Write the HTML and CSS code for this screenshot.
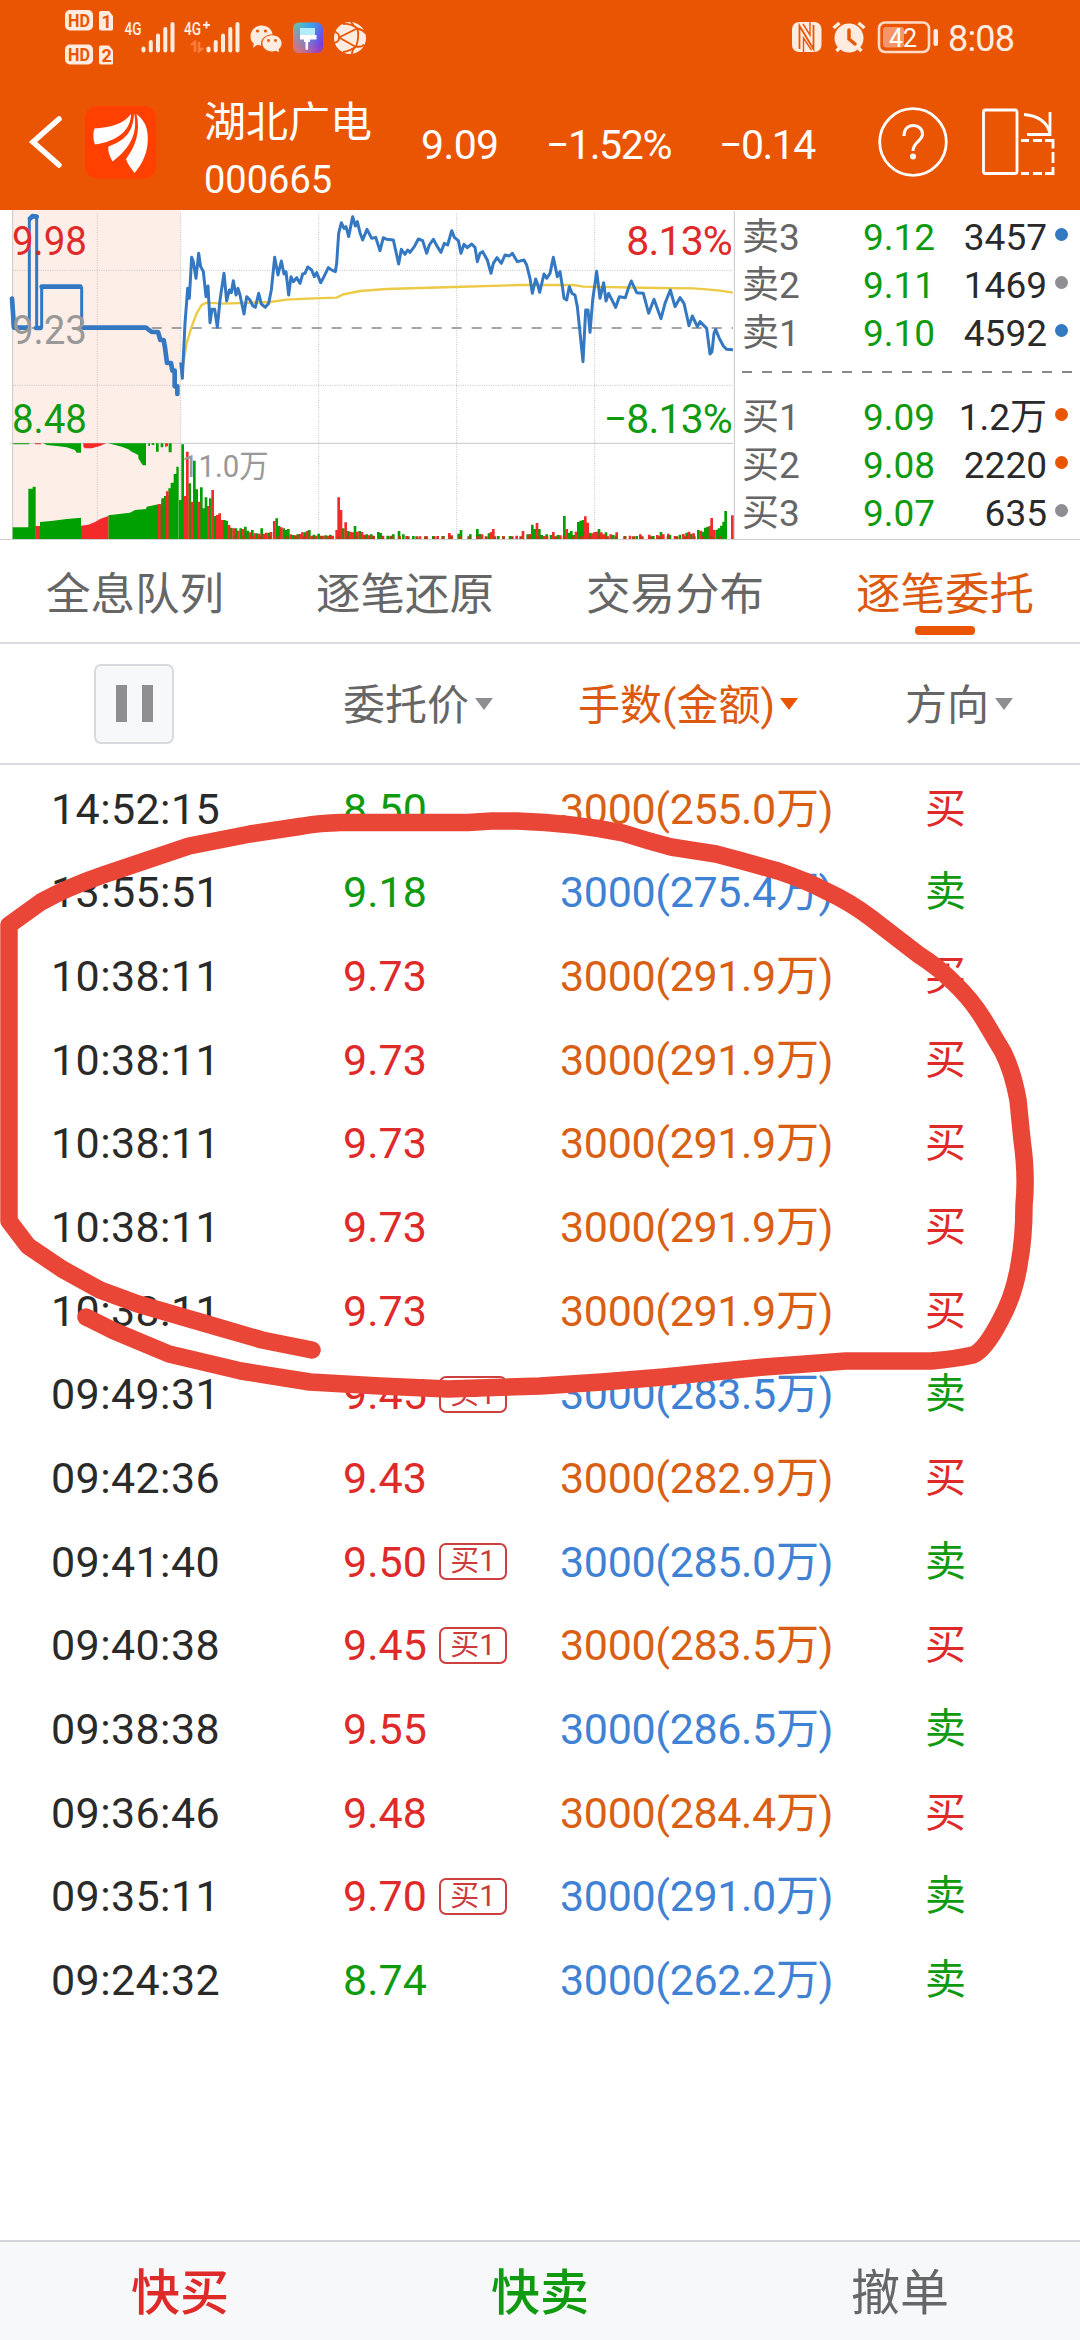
FILE: index.html
```html
<!DOCTYPE html>
<html lang="zh-CN">
<head>
<meta charset="utf-8">
<title>湖北广电 000665</title>
<link rel="stylesheet" href="styles.css">
</head>
<body>
<div class="screen">
  <header class="top">
    <div class="status">
      <svg class="status-left" width="380" height="74" viewBox="0 0 380 74">
        <g class="sfill">
          <rect x="65" y="10" width="28" height="20.500" rx="5"/>
          <path d="M101 11h8l4 5v13a1.500 1.500 0 0 1-1.500 1.500h-10.500a2 2 0 0 1-2-2V13a2 2 0 0 1 2-2z"/>
          <rect x="65" y="44.500" width="28" height="20" rx="5"/>
          <path d="M101 45.500h8l4 5v12.500a1.500 1.500 0 0 1-1.500 1.500h-10.500a2 2 0 0 1-2-2V47.500a2 2 0 0 1 2-2z"/>
        </g>
        <text class="hd" x="68" y="26.500" textLength="22" lengthAdjust="spacingAndGlyphs">HD</text>
        <text class="hd" x="68" y="60.700" textLength="22" lengthAdjust="spacingAndGlyphs">HD</text>
        <text class="hd" x="101.500" y="27.500">1</text>
        <text class="hd" x="101.500" y="61.500">2</text>
        <text class="net" x="124.500" y="35" textLength="17" lengthAdjust="spacingAndGlyphs">4G</text>
        <text class="net" x="184" y="35" textLength="17" lengthAdjust="spacingAndGlyphs">4G</text>
        <path class="sline" stroke-width="2" d="M203 25h7M206.500 21.500v7"/>
        <path class="sline" stroke-width="4" stroke-linecap="round" d="M143.500 48.500v2M150.800 42v8.500M158 35.500v15M165.300 29v21.500M172.500 24v26.500M208.500 48.500v2M215.700 42v8.500M223 35.500v15M230.300 29v21.500M237.500 24v26.500"/>
        <path d="M191 45l4-3v10M199 42v9l4-3" fill="none" stroke="#ff7b40" stroke-width="2.500"/>
        <g class="sfill">
          <path d="M261.500 25.500c6 0 10.800 4 11 8.800-6.500.2-11.500 4.300-11.500 9.400l.2 1.800-4.200-.4-4 2.600.8-4.300c-2-1.500-3.300-4-3.300-7 0-6 4.900-10.900 11-10.900z"/>
          <path d="M272 35.300c5.500 0 9.600 3.600 9.600 8 0 2.400-1.200 4.600-3 6l.6 3-3.200-1.600c-1.200.5-2.600.7-4 .7-5.400 0-9.600-3.600-9.600-8.100 0-4.400 4.200-8 9.600-8z"/>
          <circle cx="350" cy="38" r="16"/>
        </g>
        <g fill="#ea5504"><circle cx="257.500" cy="31" r="1.600"/><circle cx="265.500" cy="31" r="1.600"/><circle cx="268.500" cy="40.500" r="1.400"/><circle cx="275.500" cy="40.500" r="1.400"/></g>
        <g fill="none" stroke="#ea5504" stroke-width="1.800"><path d="M334 31q6 3 5 7 0 4-5 5M339 37.500l18-9M339 37.500l17 9.500M351 22q2 4 6.500 6.500 2 9-1.500 18-4 3-4 7.500M343 24q7-1 14.500 4.500 5 1 8.500 5M343 52q7-1 13-5.500 6 1 8-2"/></g>
        <defs>
          <linearGradient id="pa" x1="0" y1="0" x2="1" y2=".6"><stop offset="0" stop-color="#5fd0b0"/><stop offset=".5" stop-color="#3d9df0"/><stop offset="1" stop-color="#7a3ee0"/></linearGradient>
          <linearGradient id="pb" x1="1" y1="0" x2="0" y2="1"><stop offset=".4" stop-color="#ff6060" stop-opacity="0"/><stop offset="1" stop-color="#ff6a60" stop-opacity=".95"/></linearGradient>
        </defs>
        <rect x="293" y="22.500" width="30" height="30.500" rx="6" fill="url(#pa)"/>
        <rect x="293" y="22.500" width="30" height="30.500" rx="6" fill="url(#pb)"/>
        <path fill="#b4ecfa" d="M300 28h15v8h-15z"/>
        <path fill="#fff" d="M300 35h16.500v4.500h-6.500l-.2 2.500-1.700 0v7q-1.300 2-2.600 0v-7h-1.500v-2.500h-4z"/>
      </svg>
      <div class="status-right">
        <svg width="148" height="74" viewBox="791 0 148 74">
          <rect class="sfill" x="792" y="22" width="29.500" height="30" rx="7"/>
          <path d="M799.500 49V26l14 23V25" fill="none" stroke="#ea5504" stroke-width="1.800"/>
          <path d="M803.500 52V38l8 12M810 22v13l-7-11" fill="none" stroke="#ea5504" stroke-width="1.400"/>
          <circle class="sfill" cx="849" cy="38" r="14.500"/>
          <path class="sline" stroke-width="3.500" d="M833.500 28l6-5M864.500 28l-6-5M836.500 51l4-4M861.500 51l-4-4"/>
          <path d="M849 30v9l6 5" fill="none" stroke="#ea5504" stroke-width="3.500" stroke-linecap="round"/>
          <rect x="879" y="22.500" width="50" height="29.500" rx="6" fill="none" stroke="#ffdcc8" stroke-width="2.600"/>
          <rect x="883" y="27" width="21" height="20.500" rx="3" fill="#f5966a"/>
          <rect class="sfill" x="933.500" y="29" width="4.500" height="17" rx="2"/>
          <text class="bat" x="889" y="46.500">42</text>
        </svg>
        <span class="clock">8:08</span>
      </div>
    </div>
    <div class="titlebar">
      <svg class="back" width="160" height="80" viewBox="0 102 160 80">
        <path d="M59 119L33 142l26 23" fill="none" stroke="#fff" stroke-width="5.500" stroke-linecap="round"/>
        <rect x="85" y="106" width="71" height="72.500" rx="12" fill="#ff4000"/>
        <g fill="#fff">
          <path d="M131 114c0 15-12 27-36 30.500-2-5-2-12-.5-16 15-1 29-4 36.500-14.500z"/>
          <path d="M134 113c4 18-2 34-21.500 48.500-3-6-5-11-4-15 17-6 25-15 25.500-33.500z"/>
          <path d="M136.500 114c11 8 12 20 11 30-1 12-7 22-13 29-3-4-7-9-8.500-14 9-12 15-27 10.500-45z"/>
        </g>
      </svg>
      <div class="stock"><span class="name">湖北广电</span><span class="code">000665</span></div>
      <span class="q q1">9.09</span><span class="q q2">−1.52%</span><span class="q q3">−0.14</span>
      <svg class="tools" width="150" height="80" viewBox="876 102 150 80">
        <circle cx="913" cy="142" r="33.300" fill="none" stroke="#fff" stroke-width="2.800"/>
        <path d="M904 136c0-7 4-10.500 9.500-10.500 5 0 9 3.500 9 8.500 0 7-9.500 8-9.500 17" fill="none" stroke="#fff" stroke-width="3"/>
        <circle cx="913" cy="156.500" r="3" fill="#fff"/>
      </svg>
      <svg class="turn" width="78" height="80" viewBox="980 102 78 80">
        <g fill="none" stroke="#fff" stroke-width="2.800"><rect x="983.500" y="110" width="33.500" height="63.500" rx="2"/>
        <path d="M1024 114.500q22 2 26 19M1050 112v22.500h-23"/>
        <path d="M1021 140.500h8M1033 140.500h9M1045 140.500h8v8M1053 152v11M1053 167v6.500h-8M1042 173.500h-9M1029 173.500h-8"/></g>
      </svg>
    </div>
  </header>

  <section class="market">
    <svg class="chart" width="736" height="330" viewBox="0 30 2208 990">
      <rect x="38" y="30" width="504" height="987" fill="#fdeee7"/>
      <g stroke="#c4c4c4" stroke-width="3" stroke-dasharray="3 4" fill="none"><path d="M292 40V1015M542 40V1015M956 40V1015M1370 40V1015M1784 40V1015M38 211H2199M38 556H2199"/></g>
      <path d="M38 30V1017M2203 33V1018M30 730H2199" stroke="#c8c8cc" stroke-width="3" fill="none"/>
      <path d="M95 384H2199" stroke="#888" stroke-width="5" stroke-dasharray="30 30"/>
      <g fill="#00a000">
        <path d="M38 1017V982H85V866H98V860H107V1017zM120 1017V966L160 962L200 957L243 953V1017zM325 1017V946L390 938L405 930L438 927L440 920L475 913H484V895H492V888H505V865H512V848H521V822H529V800H536V1017z"/>
        <path d="M40 730H88V733H40zM130 730H243V758H230L225 750L200 742L170 738L140 735zM325 730H438V796H428L415 775V765L395 755L385 748L365 740zM445 730h5v8h-5zM455 730h8v5h-8zM468 730h8v25h-8zM482 730h8v12h-8zM506 730h9v27h-9z"/>
      </g>
      <path fill="#f22a2a" d="M106 1017V978H120V1017zM243 1017V977L265 974L285 966L300 957L325 948V1017zM474 1017V912H482V1017zM498 1017V874H506V1017zM250 730H318L300 738L275 745H255L250 740zM105 730h18v3h-18zM494 730h10v7l-8 5z"/>
      <path fill="none" stroke="#7b5a10" stroke-width="3" d="M486 1017V900"/>
      <path fill="none" stroke="#00a000" stroke-width="8" d="M541 1017V900M548 1017V733M569 1017V850M583 1017V782M590 1017V868M604 1017V862M611 1017V925M618 1017V892M631 1017V895M645 1017V948M673 1017V960M680 1017V962M694 1017V983M708 1017V985M722 1017V985M736 1017V980M743 1017V992M757 1017V990M771 1017V1000M785 1017V985M806 1017V998M830 1017V955M837 1017V978M851 1017V985M858 1017V990M865 1017V987M879 1017V1005M893 1017V1003M914 1017V997M928 1017V990M942 1017V1004M956 1017V1001M977 1017V1006M991 1017V1004M1030 1017V985M1044 1017V993M1065 1017V978M1079 1017V993M1100 1017V1003M1114 1017V1003M1135 1017V996M1142 1017V999M1163 1017V1007M1180 1017V1003M1197 1017V993M1210 1017V1003M1240 1017V1008M1300 1017V1008M1330 1017V1008M1376 1017V1001M1383 1017V990M1411 1017V1003M1432 1017V987M1439 1017V1002M1467 1017V1000M1495 1017V1008M1530 1017V1008M1583 1017V1003M1597 1017V974M1604 1017V987M1618 1017V987M1625 1017V1005M1640 1017V1003M1653 1017V1005M1674 1017V1005M1693 1017V948M1707 1017V998M1714 1017V993M1721 1017V1005M1735 1017V966M1742 1017V962M1749 1017V960M1770 1017V998M1797 1017V987M1818 1017V997M1840 1017V1005M1875 1017V1008M1910 1017V1008M1960 1017V1008M1983 1017V996M2010 1017V1005M2040 1017V1004M2060 1017V998M2074 1017V1001M2095 1017V990M2109 1017V995M2116 1017V983M2123 1017V980M2150 1017V989M2157 1017V985M2164 1017V977M2171 1017V965M2177 1017V933"/>
      <path fill="none" stroke="#f22a2a" stroke-width="8" d="M555 1017V888M562 1017V755M576 1017V905M597 1017V905M625 1017V918M638 1017V870M652 1017V945M659 1017V940M666 1017V960M687 1017V975M701 1017V985M715 1017V992M729 1017V987M750 1017V997M764 1017V1000M778 1017V1001M792 1017V1001M799 1017V998M813 1017V996M823 1017V963M844 1017V982M872 1017V1003M886 1017V1006M900 1017V1002M907 1017V997M921 1017V993M935 1017V1007M949 1017V1007M963 1017V1007M970 1017V1007M984 1017V1007M998 1017V1007M1010 1017V990M1016 1017V892M1023 1017V930M1037 1017V967M1051 1017V995M1058 1017V997M1072 1017V995M1086 1017V996M1093 1017V1004M1107 1017V1006M1121 1017V1007M1149 1017V1007M1173 1017V1007M1220 1017V1008M1260 1017V1009M1280 1017V1009M1313 1017V1008M1348 1017V999M1355 1017V1006M1446 1017V1003M1474 1017V996M1480 1017V987M1510 1017V1009M1550 1017V1007M1569 1017V993M1590 1017V1002M1611 1017V969M1632 1017V1008M1660 1017V996M1681 1017V1006M1700 1017V987M1728 1017V995M1756 1017V949M1763 1017V968M1777 1017V1000M1784 1017V996M1791 1017V995M1804 1017V997M1811 1017V1003M1832 1017V1003M1850 1017V997M1890 1017V1007M1921 1017V1003M1948 1017V1004M1972 1017V1005M1990 1017V1003M2005 1017V1001M2025 1017V1008M2050 1017V1002M2067 1017V995M2081 1017V1000M2102 1017V992M2130 1017V978M2135 1017V954M2142 1017V990M2197 1017V946"/>
      <path d="M700 1013H2180" stroke="#b04010" stroke-width="8" stroke-dasharray="9 17" fill="none"/>
      <path fill="none" stroke="#ecca45" stroke-width="7" d="M547 510L560 430L575 380L590 340L605 315L620 308L670 311L810 306L860 299L940 295L1010 293L1030 283L1080 273L1160 267L1360 261L1560 255H1720L1750 260L1970 264L2080 265L2120 268L2160 272L2199 278"/>
      <g fill="none" stroke="#3478c2" stroke-width="9" stroke-linejoin="round">
        <path d="M36 295L40 383M88 383V60L97 50L110 52V383M125 383V260M245 260V383"/>
        <path stroke-width="14" stroke-linecap="round" d="M36 296L42 383H85M90 56L98 48L110 50M108 384H122M125 260H241M250 383H438L455 396H474L481 420H491L495 443L501 489H513L517 512H524V559H532V582"/>
        <path d="M542 487L547 535L555 370L563 265L568 295L575 172L580 185L588 235L596 160L602 200L610 215L618 290L624 258L630 368L636 328H644L652 382L660 300L672 220L680 303L688 270L694 278L700 242L708 285L714 265L720 285L732 342L740 290L750 300L758 317L766 322L776 280L784 312L796 322L806 310L814 270L824 172L834 225L844 183L852 222L858 215L866 285L873 230L880 245L890 233L900 250L908 222L915 220L923 201L935 210L943 230L950 218L962 248L972 230L985 203L995 210L1006 215L1010 190L1016 100L1024 68L1032 85L1038 80L1046 110L1058 50L1066 78L1072 65L1080 98L1088 120L1101 88L1115 115L1127 112L1140 152L1150 113L1160 118L1180 120L1196 192L1204 148L1215 163L1223 150L1230 157L1243 140L1255 117L1268 122L1280 160L1288 135L1300 118L1312 140L1323 157L1333 130L1343 135L1355 92L1363 112L1375 122L1383 160L1392 133L1402 143L1415 132L1425 142L1432 185L1440 160L1448 155L1462 180L1473 220L1480 190L1491 173L1504 190L1515 165L1528 168L1537 160L1552 185L1572 180L1580 195L1590 235L1597 280L1607 237L1612 250L1619 277L1632 222L1640 235L1650 220L1660 172L1672 230L1680 215L1688 265L1692 295L1700 300L1708 260L1716 280L1725 285L1732 320L1749 485L1757 330H1764L1770 397L1778 300L1790 214L1800 295L1811 248L1818 303L1826 280L1847 322L1858 290L1876 293L1886 262L1894 243L1910 278L1930 280L1946 340L1962 298L1983 356L1995 310L2011 270L2025 320L2040 293L2052 310L2067 377L2077 348L2092 380L2100 365L2120 385L2130 462L2136 455L2142 400L2147 388L2158 415L2170 438L2180 448L2199 449"/>
      </g>
      <g class="chart-text">
        <text x="36" y="165" fill="#df2a2a" textLength="225" lengthAdjust="spacingAndGlyphs">9.98</text>
        <text x="36" y="432" fill="#999" textLength="225" lengthAdjust="spacingAndGlyphs">9.23</text>
        <text x="36" y="699" fill="#109a10" textLength="225" lengthAdjust="spacingAndGlyphs">8.48</text>
        <text class="pct" x="2196" y="165" fill="#df2a2a">8.13%</text>
        <text class="pct" x="2196" y="699" fill="#109a10">−8.13%</text>
        <text class="vol" x="546" y="831" fill="#999" textLength="260" lengthAdjust="spacingAndGlyphs">11.0万</text>
      </g>
    </svg>
    <div class="book">
      <div class="level"><span class="side">卖3</span><span class="bid">9.12</span><span class="qty">3457</span><i class="dot blue"></i></div>
      <div class="level"><span class="side">卖2</span><span class="bid">9.11</span><span class="qty">1469</span><i class="dot grey"></i></div>
      <div class="level"><span class="side">卖1</span><span class="bid">9.10</span><span class="qty">4592</span><i class="dot blue"></i></div>
      <svg class="sep" width="332" height="36" viewBox="0 0 332 36"><path d="M0 14H330" stroke="#888" stroke-width="2" stroke-dasharray="10 10"/></svg>
      <div class="level"><span class="side">买1</span><span class="bid">9.09</span><span class="qty">1.2万</span><i class="dot orange"></i></div>
      <div class="level"><span class="side">买2</span><span class="bid">9.08</span><span class="qty">2220</span><i class="dot orange"></i></div>
      <div class="level"><span class="side">买3</span><span class="bid">9.07</span><span class="qty">635</span><i class="dot grey"></i></div>
    </div>
  </section>

  <nav class="tabs">
    <span class="tab">全息队列</span><span class="tab">逐笔还原</span><span class="tab">交易分布</span><span class="tab active">逐笔委托</span>
  </nav>

  <div class="thead cols">
    <span class="pause"><i></i><i></i></span>
    <span class="th">委托价<i class="tri"></i></span>
    <span class="th hot">手数(金额)<i class="tri"></i></span>
    <span class="th dirh">方向<i class="tri"></i></span>
  </div>

  <main class="list">
    <div class="row cols"><span class="time">14:52:15</span><span class="price down">8.50</span><span class="amt buy">3000(255.0万)</span><span class="dir up">买</span></div>
    <div class="row cols"><span class="time">13:55:51</span><span class="price down">9.18</span><span class="amt sell">3000(275.4万)</span><span class="dir down">卖</span></div>
    <div class="row cols"><span class="time">10:38:11</span><span class="price up">9.73</span><span class="amt buy">3000(291.9万)</span><span class="dir up">买</span></div>
    <div class="row cols"><span class="time">10:38:11</span><span class="price up">9.73</span><span class="amt buy">3000(291.9万)</span><span class="dir up">买</span></div>
    <div class="row cols"><span class="time">10:38:11</span><span class="price up">9.73</span><span class="amt buy">3000(291.9万)</span><span class="dir up">买</span></div>
    <div class="row cols"><span class="time">10:38:11</span><span class="price up">9.73</span><span class="amt buy">3000(291.9万)</span><span class="dir up">买</span></div>
    <div class="row cols"><span class="time">10:38:11</span><span class="price up">9.73</span><span class="amt buy">3000(291.9万)</span><span class="dir up">买</span></div>
    <div class="row cols"><span class="time">09:49:31</span><span class="price up">9.45<b class="tag">买1</b></span><span class="amt sell">3000(283.5万)</span><span class="dir down">卖</span></div>
    <div class="row cols"><span class="time">09:42:36</span><span class="price up">9.43</span><span class="amt buy">3000(282.9万)</span><span class="dir up">买</span></div>
    <div class="row cols"><span class="time">09:41:40</span><span class="price up">9.50<b class="tag">买1</b></span><span class="amt sell">3000(285.0万)</span><span class="dir down">卖</span></div>
    <div class="row cols"><span class="time">09:40:38</span><span class="price up">9.45<b class="tag">买1</b></span><span class="amt buy">3000(283.5万)</span><span class="dir up">买</span></div>
    <div class="row cols"><span class="time">09:38:38</span><span class="price up">9.55</span><span class="amt sell">3000(286.5万)</span><span class="dir down">卖</span></div>
    <div class="row cols"><span class="time">09:36:46</span><span class="price up">9.48</span><span class="amt buy">3000(284.4万)</span><span class="dir up">买</span></div>
    <div class="row cols"><span class="time">09:35:11</span><span class="price up">9.70<b class="tag">买1</b></span><span class="amt sell">3000(291.0万)</span><span class="dir down">卖</span></div>
    <div class="row cols"><span class="time">09:24:32</span><span class="price down">8.74</span><span class="amt sell">3000(262.2万)</span><span class="dir down">卖</span></div>
  </main>

  <footer class="actions"><span class="up">快买</span><span class="down">快卖</span><span class="cancel">撤单</span></footer>

  <svg class="marker" width="1080" height="640" viewBox="0 770 1080 640">
    <path d="M312 1350L262 1340L207 1324L138 1304L100 1290L62 1269L28 1246L9 1221V925L41 902Q68 887 103 875L189 846L250 834L303 826Q320 823 341 822.500H468L492 821L517 821Q575 823 623 833Q648 841 671 847L716 854Q750 863 778 871Q805 880 826 891Q850 902 871 918L919 955Q938 967 953 982Q972 1000 984 1020L1003 1052Q1013 1072 1018 1100L1022 1140Q1027 1175 1024 1205Q1024 1238 1019 1265Q1014 1296 1000 1321Q985 1350 973 1355Q955 1359 931 1361H846L764 1367L664 1377L602 1382L540 1386L448 1389L380 1386L310 1382L241 1371L169 1354L114 1331L86 1317" fill="none" stroke="#ea4637" stroke-width="17.500" stroke-linecap="round" stroke-linejoin="round"/>
  </svg>
</div>
</body>
</html>
```
FILE: styles.css
```css
* { box-sizing: border-box; }
body { margin: 0; background: #fff; }
i, b { font-style: normal; font-weight: 400; }
svg { display: block; flex: none; }
.screen {
  position: relative;
  width: 1080px;
  height: 2340px;
  overflow: hidden;
  display: flex;
  flex-direction: column;
  background: #fff;
  color: #2a2a2a;
  font-family: Roboto, "Noto Sans CJK SC", sans-serif;
}
.top { height: 210px; background: #ea5504; color: #fff; flex: none; }
.status { display: flex; justify-content: space-between; height: 74px; }
.status-right { display: flex; align-items: center; width: 289px; color: #ffece0; }
.clock { font-size: 36px; line-height: 74px; margin-left: 9px; padding-top: 3px; letter-spacing: -.8px; }
.sfill { fill: #ffece0; }
.sline { fill: none; stroke: #ffece0; }
.hd { font-size: 18px; font-weight: 700; fill: #ea5504; }
.net { font-size: 19px; font-weight: 500; fill: #ffece0; }
.bat { font-size: 25px; fill: #fff; }

.titlebar { display: flex; align-items: center; height: 136px; }
.stock { width: 217px; margin-left: 44px; padding-top: 18px; display: flex; flex-direction: column; gap: 9px; }
.name { font-size: 42px; line-height: 48px; }
.code { font-size: 38px; line-height: 48px; }
.q { font-size: 41px; line-height: 48px; padding-top: 6px; white-space: nowrap; letter-spacing: -.6px; }
.q1 { width: 125px; }
.q2 { width: 173px; letter-spacing: -1.4px; }
.q3 { width: 157px; letter-spacing: -1.5px; }
.turn { margin-left: -46px; }

.market { display: flex; height: 330px; border-bottom: 1px solid #cfcfd4; flex: none; }
.chart-text { font-size: 123px; }
.chart-text .vol { font-size: 96px; }
.chart-text .pct { text-anchor: end; letter-spacing: -2.6px; }
.book { width: 344px; padding: 4px 12px 0 6px; }
.level { display: flex; align-items: center; height: 48px; font-size: 37px; line-height: 48px; }
.side { width: 121px; color: #666; }
.bid { width: 80px; color: #109a10; }
.qty { flex: none; width: 104px; text-align: right; }
.dot { width: 13px; height: 13px; border-radius: 50%; margin: -7px 0 0 8px; }
.blue { background: #3478c2; }
.grey { background: #8e8e93; }
.orange { background: #ea5504; }

.tabs { display: grid; grid-template-columns: repeat(4, 1fr); height: 104px; border-bottom: 2px solid #dcdce0; flex: none; }
.tab { display: flex; flex-direction: column; align-items: center; font-size: 44.5px; line-height: 60px; padding-top: 25px; color: #666; }
.active { color: #dc5a10; }
.active::after { content: ""; width: 60px; height: 9px; border-radius: 4px; margin-top: 1px; background: #ea5504; }

.cols { display: grid; grid-template-columns: 343px 217px 345px 1fr; align-items: center; }
.thead { height: 121px; border-bottom: 2px solid #dcdce0; color: #666; flex: none; }
.pause { width: 80px; height: 80px; margin-left: 94px; border: 2px solid #d8dae0; border-radius: 7px; background: #f6f8fa; display: flex; align-items: center; justify-content: center; gap: 15px; }
.pause i { width: 11px; height: 37px; background: #8e8e93; }
.th { display: flex; align-items: center; font-size: 42px; line-height: 56px; padding-top: 4px; white-space: nowrap; }
.hot { color: #dc5a10; margin-left: 18px; }
.tri { border: 9px solid transparent; border-top: 12px solid #8e8e93; border-bottom: 0; margin: -4px 0 0 6px; }
.hot .tri { border-top-color: #ea5504; margin-left: 5px; }

.list { padding-top: 2px; flex: 1; }
.row { height: 83.65px; font-size: 43px; line-height: 60px; white-space: nowrap; }
.time { padding-left: 51px; letter-spacing: .4px; }
.price { display: flex; align-items: center; }
.amt { letter-spacing: -.35px; }
.amt.buy { color: #d95f14; }
.amt.sell { color: #3f82d4; }
.dir { padding-left: 20px; font-size: 41px; }
.up { color: #df2a2a; }
.down { color: #109a10; }
.tag { width: 68px; height: 37px; margin-left: 12px; border: 2px solid #cc4040; border-radius: 7px; color: #cc3a3a; font-size: 29px; line-height: 32px; text-align: center; }

.actions { display: grid; grid-template-columns: repeat(3, 1fr); align-items: center; height: 100px; padding-top: 6px; border-top: 2px solid #d3d5da; background: #f6f8fa; text-align: center; font-size: 49px; line-height: 70px; flex: none; }
.actions .up, .actions .down { font-weight: 500; }
.cancel { color: #666; }

.marker { position: absolute; left: 0; top: 770px; pointer-events: none; }
```
